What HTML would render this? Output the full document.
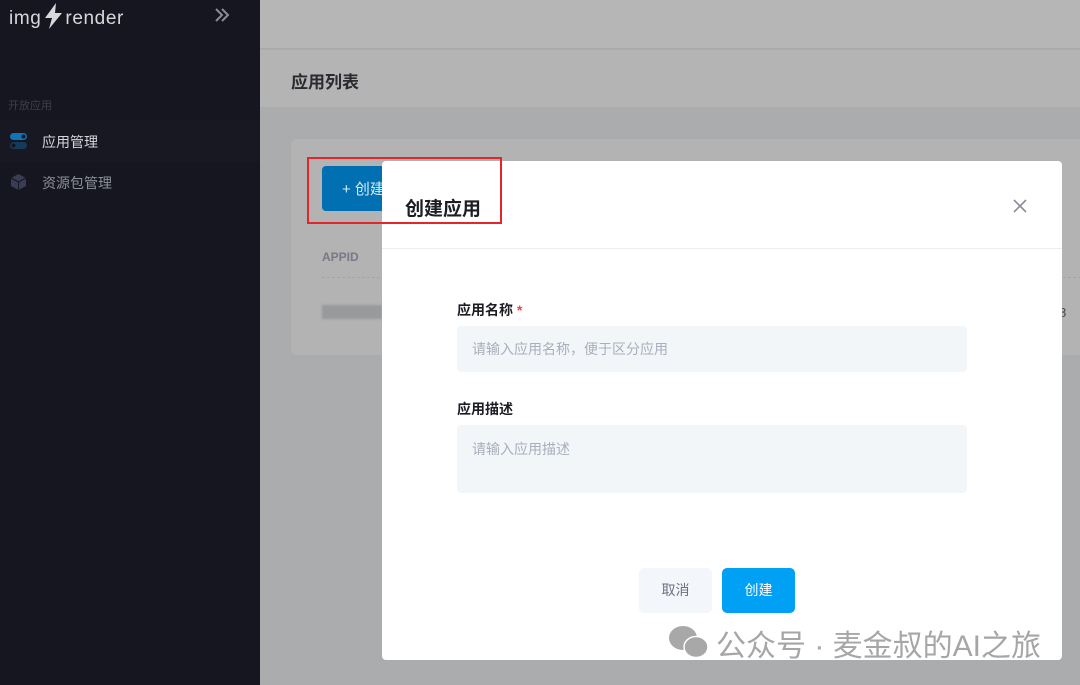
<!DOCTYPE html>
<html><head><meta charset="utf-8"><style>
*{margin:0;padding:0;box-sizing:border-box}
body{width:1080px;height:685px;overflow:hidden;position:relative;font-family:"Liberation Sans","Noto Sans CJK SC",sans-serif;background:#abacae}
.side{position:absolute;left:0;top:0;width:260px;height:685px;background:#15161f}
.top{position:absolute;left:260px;top:0;right:0;height:49px;background:#b6b6b7;border-bottom:1px solid #a9a9aa}
.title{position:absolute;left:260px;top:50px;right:0;height:57px;background:#b4b4b5}
.card{position:absolute;left:291px;top:139px;width:800px;height:216px;background:#b3b3b4;border-radius:6px}
.modal{position:absolute;left:382px;top:161px;width:680px;height:499px;background:#fff;border-radius:4px}
.field{position:absolute;left:75px;width:510px;background:#f3f6f9;border-radius:4px;color:#a8aebb;font-size:14px;padding:0 15px}
</style></head><body>
<div class="side">
 <div style="position:absolute;left:9px;top:3px;color:#d8d8dc;font-size:19px;letter-spacing:.6px;white-space:nowrap">img<svg width="20" height="26" viewBox="0 0 20 26" style="vertical-align:-5px;margin:0 2px"><path d="M13 0 L2 15 H9 L6 26 L19 10 H12 Z" fill="#d8d8dc"/></svg>render</div>
 <svg style="position:absolute;left:214px;top:8px" width="16" height="14" viewBox="0 0 16 14"><path d="M2 1 L8 7 L2 13 M8 1 L14 7 L8 13" stroke="#8a8c97" stroke-width="2" fill="none"/></svg>
 <div style="position:absolute;left:8px;top:97px;color:#3d3f4a;font-size:11px">开放应用</div>
 <div style="position:absolute;left:0;top:120px;width:260px;height:42px;background:#171822"></div>
 <svg style="position:absolute;left:10px;top:133px" width="18" height="17"><rect x="0" y="0" width="17" height="7" rx="3.5" fill="#1173b8"/><circle cx="13.5" cy="3.5" r="2" fill="#15161f"/><rect x="0" y="9" width="17" height="7" rx="3.5" fill="#153a5a"/><circle cx="3.5" cy="12.5" r="2" fill="#15161f"/></svg>
 <div style="position:absolute;left:42px;top:132px;color:#d5d6dc;font-size:14px">应用管理</div>
 <svg style="position:absolute;left:10px;top:173px" width="17" height="18"><path d="M8.5 1 L16 5 V13 L8.5 17 L1 13 V5 Z" fill="#3a3c55"/><path d="M1 5 L8.5 9 L16 5 M8.5 9 V17" stroke="#15161f" stroke-width="1" fill="none"/></svg>
 <div style="position:absolute;left:42px;top:173px;color:#8c8e99;font-size:14px">资源包管理</div>
</div>
<div class="top"></div>
<div class="title"><div style="position:absolute;left:31px;top:18px;font-size:17px;font-weight:bold;color:#2a2b30">应用列表</div></div>
<div class="card">
 <div style="position:absolute;left:31px;top:27px;width:90px;height:45px;background:#0070b2;border-radius:4px;color:#ddeaf5;font-size:15px;padding:12px 0 0 20px">+ 创建</div>
 <div style="position:absolute;left:31px;top:111px;font-size:12px;font-weight:bold;color:#777a85">APPID</div>
 <div style="position:absolute;left:31px;top:138px;width:769px;border-top:1px dashed #a5a5a6"></div>
 <div style="position:absolute;left:31px;top:166px;width:60px;height:14px;background:#999a9c;filter:blur(1px)"></div>
 <div style="position:absolute;left:768px;top:166px;font-size:13px;color:#444">8</div>
</div>
<div class="modal">
 <div style="position:absolute;left:23px;top:33px;font-size:19px;font-weight:bold;color:#1d1e24">创建应用</div>
 <svg style="position:absolute;left:631px;top:38px" width="14" height="14"><path d="M1 1 L13 13 M13 1 L1 13" stroke="#8a8d98" stroke-width="1.6"/></svg>
 <div style="position:absolute;left:0;top:87px;width:680px;height:1px;background:#eceef2"></div>
 <div style="position:absolute;left:75px;top:139px;font-size:14px;font-weight:bold;color:#1d1e24">应用名称 <span style="color:#e5484d">*</span></div>
 <div class="field" style="top:165px;height:46px;line-height:46px">请输入应用名称，便于区分应用</div>
 <div style="position:absolute;left:75px;top:238px;font-size:14px;font-weight:bold;color:#1d1e24">应用描述</div>
 <div class="field" style="top:264px;height:68px;padding-top:14px">请输入应用描述</div>
 <div style="position:absolute;left:257px;top:407px;width:73px;height:45px;background:#f3f6fa;border-radius:5px;color:#6c7080;font-size:14px;text-align:center;line-height:45px">取消</div>
 <div style="position:absolute;left:340px;top:407px;width:73px;height:45px;background:#00a0f5;border-radius:5px;color:#fff;font-size:14px;text-align:center;line-height:45px">创建</div>
 <svg style="position:absolute;left:286px;top:463px" width="42" height="36"><ellipse cx="15" cy="14" rx="14" ry="12" fill="#a8a8a8"/><ellipse cx="28" cy="23" rx="12" ry="10.5" fill="#a8a8a8" stroke="#fff" stroke-width="1.5"/></svg>
 <div style="position:absolute;left:334px;top:460px;font-size:30px;color:#a6a6a6;white-space:nowrap">公众号 · 麦金叔的AI之旅</div>
</div>
<div style="position:absolute;left:307px;top:157px;width:195px;height:67px;border:2px solid #e4262a"></div>
</body></html>
